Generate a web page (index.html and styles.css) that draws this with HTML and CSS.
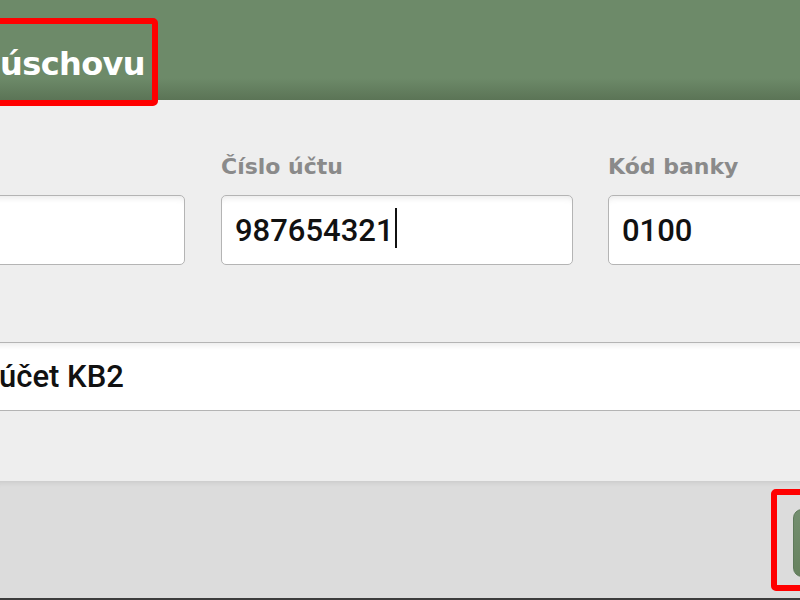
FILE: index.html
```html
<!DOCTYPE html>
<html lang="cs">
<head>
<meta charset="utf-8">
<title>Převod na úschovu</title>
<link rel="stylesheet" href="styles.css">
</head>
<body>
<div class="dialog">
  <header class="header">
    <h1 class="title">úschovu</h1>
    <span class="mark mark-title"></span>
  </header>
  <main class="form">
    <div class="row">
      <div class="field">
        <div class="label">&nbsp;</div>
        <div class="input"></div>
      </div>
      <div class="field">
        <div class="label">Číslo účtu</div>
        <div class="input">987654321<span class="caret"></span></div>
      </div>
      <div class="field">
        <div class="label">Kód banky</div>
        <div class="input">0100</div>
      </div>
    </div>
    <div class="input wide">účet KB2</div>
  </main>
  <footer class="footer">
    <button class="btn" type="button" aria-label="Uložit"></button>
    <span class="mark mark-btn"></span>
  </footer>
</div>
</body>
</html>
```
FILE: styles.css
```css
html, body {
  margin: 0;
  padding: 0;
  width: 800px;
  height: 600px;
  overflow: hidden;
  background: #eeeeee;
}
.dialog {
  width: 800px;
  height: 600px;
  display: flex;
  flex-direction: column;
  overflow: hidden;
}
.header {
  position: relative;
  height: 100px;
  flex: none;
  background: linear-gradient(to bottom, #6d8a69 0, #6d8a69 78px, #5b7456 100px);
  z-index: 2;
}
.title {
  margin: 0;
  padding-top: 45px;
  font-family: "DejaVu Sans", sans-serif;
  font-weight: bold;
  font-size: 32px;
  letter-spacing: -0.6px;
  line-height: 38px;
  color: #ffffff;
}
.mark {
  position: absolute;
  border: 6px solid #ff0000;
  border-radius: 5px;
  box-sizing: border-box;
  pointer-events: none;
}
.mark-title {
  left: -10px;
  top: 18px;
  width: 168px;
  height: 88px;
}
.form {
  height: 381px;
  flex: none;
  box-sizing: border-box;
  padding-top: 54px;
  background: #eeeeee;
}
.row {
  display: grid;
  grid-template-columns: 352px 352px 352px;
  column-gap: 36px;
  margin-left: -167px;
}
.row .field:last-child {
  margin-left: -1px;
}
.label {
  font-family: "DejaVu Sans", sans-serif;
  font-weight: bold;
  font-size: 22px;
  line-height: 26px;
  color: #8a8a8a;
  margin-bottom: 15px;
}
.input {
  box-sizing: border-box;
  height: 70px;
  display: flex;
  align-items: center;
  padding: 0 13px;
  background: #ffffff;
  border: 1px solid #b4b4b4;
  border-radius: 5px;
  box-shadow: inset 0 7px 6px -5px rgba(0, 0, 0, 0.09);
  font-family: Roboto, "Liberation Sans", sans-serif;
  font-weight: 500;
  font-size: 31px;
  color: #111111;
  white-space: nowrap;
}
.caret {
  display: inline-block;
  width: 2px;
  height: 40px;
  margin-left: 1px;
  background: #111111;
  align-self: center;
  transform: translateY(-2px);
}
.wide {
  margin: 77px -20px 0 -15px;
  border-radius: 0;
  height: 69px;
  padding-left: 13px;
}
.footer {
  position: relative;
  flex: none;
  height: 117px;
  display: flex;
  justify-content: flex-end;
  align-items: center;
  background: #dcdcdc;
  box-shadow: inset 0 6px 5px -4px rgba(0, 0, 0, 0.08);
  border-bottom: 2px solid #3c3c3c;
}
.btn {
  width: 140px;
  height: 68px;
  margin-right: -133px;
  margin-top: 6px;
  border: 1px solid #5f7a5b;
  border-radius: 9px;
  background: linear-gradient(to bottom, #748f70, #67825f);
  padding: 0;
}
.mark-btn {
  left: 771px;
  top: 8px;
  width: 100px;
  height: 102px;
}
```
